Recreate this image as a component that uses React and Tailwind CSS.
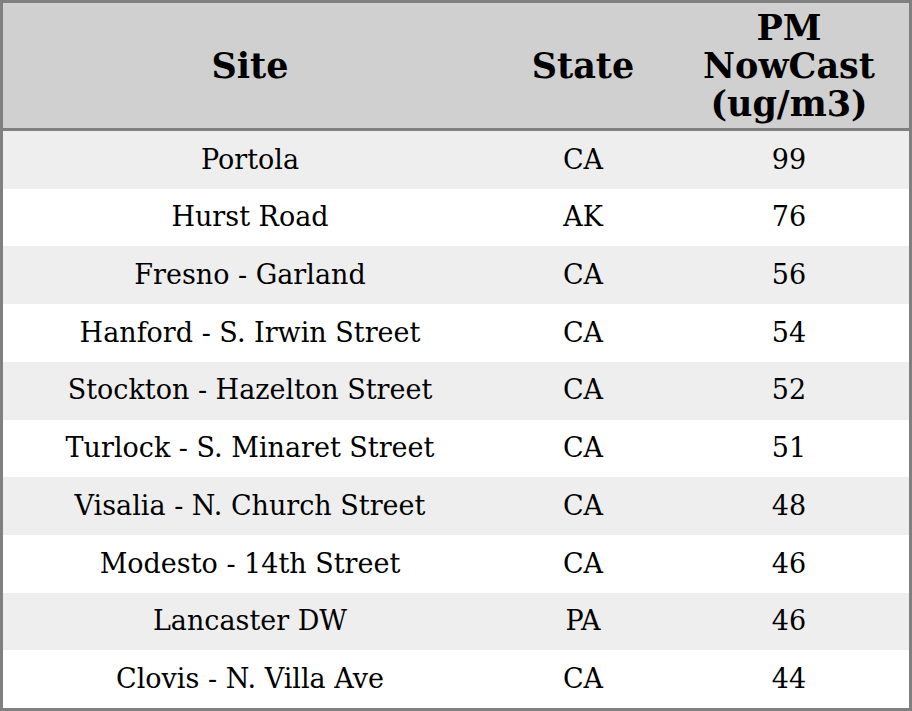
const rows = [
  ['Portola', 'CA', '99'],
  ['Hurst Road', 'AK', '76'],
  ['Fresno - Garland', 'CA', '56'],
  ['Hanford - S. Irwin Street', 'CA', '54'],
  ['Stockton - Hazelton Street', 'CA', '52'],
  ['Turlock - S. Minaret Street', 'CA', '51'],
  ['Visalia - N. Church Street', 'CA', '48'],
  ['Modesto - 14th Street', 'CA', '46'],
  ['Lancaster DW', 'PA', '46'],
  ['Clovis - N. Villa Ave', 'CA', '44'],
]

export default function App() {
  return (
    <div
      className="w-[912px] h-[711px] flex flex-col border-[3px] border-[#808080] bg-white text-black"
      style={{ fontFamily: '"DejaVu Serif", serif' }}
    >
      <div className="h-[128px] shrink-0 flex items-center bg-[#d0d0d0] border-b-[3px] border-[#808080] text-[35px] font-bold leading-[38px] text-center">
        <div className="w-[494px]">Site</div>
        <div className="w-[172px]">State</div>
        <div className="flex-1">
          PM
          <br />
          NowCast
          <br />
          (ug/m3)
        </div>
      </div>
      <div className="flex-1 flex flex-col">
        {rows.map(([site, state, pm], i) => (
          <div
            key={i}
            className={`flex-1 flex items-center text-center text-[27px] ${i % 2 === 0 ? 'bg-[#eeeeee]' : 'bg-white'}`}
          >
            <div className="w-[494px]">{site}</div>
            <div className="w-[172px]">{state}</div>
            <div className="flex-1">{pm}</div>
          </div>
        ))}
      </div>
    </div>
  )
}
